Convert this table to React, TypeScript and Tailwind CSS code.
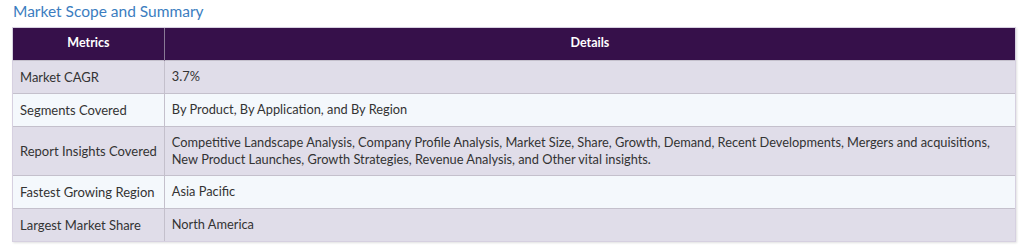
import React from "react";

const rows: [string, string][] = [
  ["Market CAGR", "3.7%"],
  ["Segments Covered", "By Product, By Application, and By Region"],
  [
    "Report Insights Covered",
    "Competitive Landscape Analysis, Company Profile Analysis, Market Size, Share, Growth, Demand, Recent Developments, Mergers and acquisitions, New Product Launches, Growth Strategies, Revenue Analysis, and Other vital insights.",
  ],
  ["Fastest Growing Region", "Asia Pacific"],
  ["Largest Market Share", "North America"],
];

export default function App() {
  return (
    <div className="w-[1024px] h-[249px] bg-white font-['Lato',sans-serif] overflow-hidden">
      <div className="pl-[13px] pt-[1px] h-[27px] text-[15.5px] leading-[20px] text-[#3b7dc0]">
        Market Scope and Summary
      </div>
      <div className="ml-[12px] w-[1004px] border border-[#d6d0e0] shadow-[1px_1px_2px_rgba(0,0,0,0.12)]">
        <table className="w-full border-collapse text-[13px] text-[#333]">
          <thead>
            <tr className="bg-[#36104a] text-white h-[32px]">
              <th className="w-[150px] font-bold text-[12.5px] text-center border-r border-[#8a7a96]">Metrics</th>
              <th className="font-bold text-[12.5px] text-center">Details</th>
            </tr>
          </thead>
          <tbody>
            {rows.map(([k, v], i) => (
              <tr
                key={k}
                className={`${i % 2 === 0 ? "bg-[#e0dde9]" : "bg-[#f4f8fc]"} border-t border-[#c4c0cc]`}
              >
                <td className="px-[7px] py-[7px] align-middle border-r border-[#c4c0cc] whitespace-nowrap leading-[18px]">
                  {k}
                </td>
                <td className="px-[7px] py-[7px] align-middle leading-[17px] text-[12.8px]">{v}</td>
              </tr>
            ))}
          </tbody>
        </table>
      </div>
    </div>
  );
}
